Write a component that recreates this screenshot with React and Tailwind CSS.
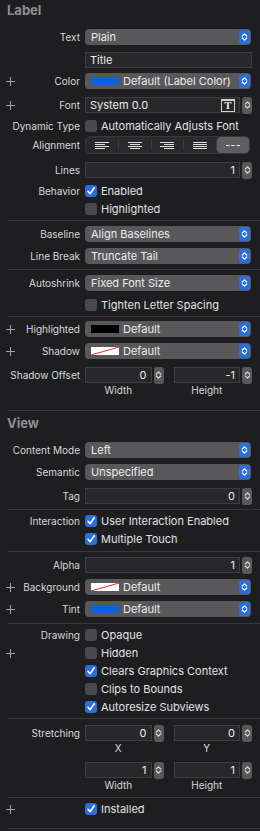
import React from "react";

const Plus = () => (
  <svg width="9" height="9" viewBox="0 0 9 9">
    <path d="M4.5 0v9M0 4.5h9" stroke="#a2a2a4" strokeWidth="1" />
  </svg>
);

const Chevrons = ({ color = "#ffffff" }) => (
  <svg width="7" height="10" viewBox="0 0 7 10">
    <path d="M1.3 4 L3.5 1.8 L5.7 4 M1.3 6 L3.5 8.2 L5.7 6" fill="none" stroke={color} strokeWidth="1.2" strokeLinecap="round" strokeLinejoin="round" />
  </svg>
);

const Check = () => (
  <svg width="10" height="10" viewBox="0 0 10 10">
    <path d="M2 5.3 L4.2 7.6 L8.2 1.8" fill="none" stroke="#ffffff" strokeWidth="1.6" strokeLinecap="round" strokeLinejoin="round" />
  </svg>
);

const Row = ({ cls, label, plus, children }) => (
  <div className={`flex h-[18px] items-center ${cls}`}>
    <div className="relative flex h-full w-[85px] shrink-0 items-center justify-end pr-[5px] text-[10px] text-[#d8d8da]">
      {plus && (
        <span className="absolute left-[6px] top-[5px] flex">
          <Plus />
        </span>
      )}
      {label}
    </div>
    <div className="flex flex-1 items-center pr-[8px]">{children}</div>
  </div>
);

const Sep = ({ cls }) => <div className={`ml-[8px] h-px bg-[#38383a] ${cls}`} />;

const Popup = ({ text, swatch }) => (
  <div className="mr-px flex h-[16px] flex-1 items-center rounded-[4px] bg-[#58585a] pl-[6px] pr-px text-[11px] text-[#ececec]">
    {swatch === "blue" && <div className="mr-[4px] h-[8px] w-[28px] bg-[#0a64d8]" />}
    {swatch === "black" && <div className="mr-[4px] h-[8px] w-[28px] bg-black" />}
    {swatch === "none" && (
      <svg className="mr-[4px]" width="28" height="8" viewBox="0 0 28 8">
        <rect width="28" height="8" fill="#ffffff" />
        <path d="M0 8 L28 0" stroke="#e8302a" strokeWidth="1" />
      </svg>
    )}
    <span>{text}</span>
    <div className="ml-auto flex h-[14px] w-[11px] items-center justify-center rounded-[3px] bg-[#2a6fdc]">
      <Chevrons />
    </div>
  </div>
);

const Field = ({ value, right, children }) => (
  <div className={`flex h-[16px] flex-1 items-center border border-[#3d3d3f] bg-[#28282a] px-[4px] text-[11px] text-[#ececec] ${right ? "justify-end" : ""}`}>
    {value}
    {children}
  </div>
);

const Stepper = () => (
  <div className="ml-[2px] flex h-[17px] w-[10px] shrink-0 items-center justify-center rounded-[3px] bg-[#58585a]">
    <Chevrons color="#d6d6d6" />
  </div>
);

const Checkbox = ({ on, text }) => (
  <div className="flex items-center gap-[4px] text-[11px] text-[#e2e2e4]">
    {on ? (
      <div className="flex h-[12px] w-[12px] items-center justify-center rounded-[3px] bg-[#2a6fdc]">
        <Check />
      </div>
    ) : (
      <div className="h-[12px] w-[12px] rounded-[3px] bg-[#4a4a4c]" />
    )}
    <span>{text}</span>
  </div>
);

const Lines = ({ kind }) => {
  const rows = [0.5, 2.5, 4.5, 6.5];
  const lens = kind === "justify" ? [14, 14, 14, 14] : [14, 10, 14, 10];
  return (
    <svg width="14" height="7" viewBox="0 0 14 7">
      {rows.map((y, i) => {
        const l = lens[i];
        let x = 0;
        if (kind === "center") x = (14 - l) / 2;
        if (kind === "right") x = 14 - l;
        return <path key={i} d={`M${x} ${y}h${l}`} stroke="#e0e0e0" strokeWidth="1" />;
      })}
    </svg>
  );
};

const Segmented = () => (
  <div className="mr-[2px] flex h-[18px] flex-1 items-stretch rounded-[5px] border border-[#38383a] bg-[#2a2a2c]">
    {["left", "center", "right", "justify"].map((k) => (
      <div key={k} className="my-[3px] flex flex-1 items-center justify-center border-r border-[#3e3e40]">
        <Lines kind={k} />
      </div>
    ))}
    <div className="flex flex-1 items-center justify-center rounded-[4px] bg-[#5e5e60]">
      <svg width="14" height="3" viewBox="0 0 14 3">
        <path d="M0 1.5h3.5M5.25 1.5h3.5M10.5 1.5h3.5" stroke="#e8e8e8" strokeWidth="1" />
      </svg>
    </div>
  </div>
);

const Pair = ({ a, b }) => (
  <div className="grid flex-1 grid-cols-2 gap-[10px]">
    <div className="flex items-center">
      <Field value={a} right />
      <Stepper />
    </div>
    <div className="flex items-center">
      <Field value={b} right />
      <Stepper />
    </div>
  </div>
);

const Captions = ({ cls, a, b }) => (
  <div className={`flex h-[12px] items-center ${cls}`}>
    <div className="w-[85px] shrink-0" />
    <div className="grid flex-1 grid-cols-2 gap-[10px] pr-[8px] text-[10px] text-[#d8d8da]">
      <div className="pr-[12px] text-center">{a}</div>
      <div className="pr-[12px] text-center">{b}</div>
    </div>
  </div>
);

const Header = ({ cls, text }) => (
  <div className={`flex h-[18px] items-center pl-[7px] text-[13px] font-bold text-[#8e8e90] ${cls}`}>{text}</div>
);

export default function App() {
  return (
    <div className="min-h-[831px] w-[260px] overflow-hidden bg-[#1e1e20] font-[Inter,sans-serif] leading-none antialiased">
      <Header cls="mt-px" text="Label" />
      <Row cls="mt-[9px]" label="Text"><Popup text="Plain" /></Row>
      <Row cls="mt-[5px]" label=""><Field value="Title" /></Row>
      <Row cls="mt-[3px]" label="Color" plus><Popup text="Default (Label Color)" swatch="blue" /></Row>
      <Row cls="mt-[6px]" label="Font" plus>
        <Field value="System 0.0">
          <div className="ml-auto flex h-[13px] w-[14px] items-center justify-center border border-t-2 border-[#d0d0d0] font-['Liberation_Serif',serif] text-[11px] font-bold text-[#e8e8e8]">T</div>
        </Field>
        <Stepper />
      </Row>
      <Row cls="mt-[3px]" label="Dynamic Type"><Checkbox text="Automatically Adjusts Font" /></Row>
      <Row cls="mt-px" label="Alignment"><Segmented /></Row>
      <Row cls="mt-[7px]" label="Lines"><Field value="1" right /><Stepper /></Row>
      <Row cls="mt-[3px]" label="Behavior"><Checkbox on text="Enabled" /></Row>
      <Row cls="mt-0" label=""><Checkbox text="Highlighted" /></Row>
      <Sep cls="mt-[2px]" />
      <Row cls="mt-[4px]" label="Baseline"><Popup text="Align Baselines" /></Row>
      <Row cls="mt-[4px]" label="Line Break"><Popup text="Truncate Tail" /></Row>
      <Sep cls="mt-[4px]" />
      <Row cls="mt-[4px]" label="Autoshrink"><Popup text="Fixed Font Size" /></Row>
      <Row cls="mt-[4px]" label=""><Checkbox text="Tighten Letter Spacing" /></Row>
      <Sep cls="mt-[2px]" />
      <Row cls="mt-[3px]" label="Highlighted" plus><Popup text="Default" swatch="black" /></Row>
      <Row cls="mt-[4px]" label="Shadow" plus><Popup text="Default" swatch="none" /></Row>
      <Row cls="mt-[6px]" label="Shadow Offset"><Pair a="0" b="-1" /></Row>
      <Captions cls="mt-0" a="Width" b="Height" />
      <Sep cls="mt-[14px]" />

      <Header cls="mt-[3px]" text="View" />
      <Row cls="mt-[9px]" label="Content Mode"><Popup text="Left" /></Row>
      <Row cls="mt-[4px]" label="Semantic"><Popup text="Unspecified" /></Row>
      <Row cls="mt-[6px]" label="Tag"><Field value="0" right /><Stepper /></Row>
      <Sep cls="mt-[4px]" />
      <Row cls="mt-[2px]" label="Interaction"><Checkbox on text="User Interaction Enabled" /></Row>
      <Row cls="mt-0" label=""><Checkbox on text="Multiple Touch" /></Row>
      <Sep cls="mt-[3px]" />
      <Row cls="mt-[4px]" label="Alpha"><Field value="1" right /><Stepper /></Row>
      <Row cls="mt-[4px]" label="Background" plus><Popup text="Default" swatch="none" /></Row>
      <Row cls="mt-[4px]" label="Tint" plus><Popup text="Default" swatch="blue" /></Row>
      <Sep cls="mt-[5px]" />
      <Row cls="mt-[2px]" label="Drawing"><Checkbox text="Opaque" /></Row>
      <Row cls="mt-0" label="" plus><Checkbox text="Hidden" /></Row>
      <Row cls="mt-0" label=""><Checkbox on text="Clears Graphics Context" /></Row>
      <Row cls="mt-0" label=""><Checkbox text="Clips to Bounds" /></Row>
      <Row cls="mt-0" label=""><Checkbox on text="Autoresize Subviews" /></Row>
      <Sep cls="mt-[2px]" />
      <Row cls="mt-[5px]" label="Stretching"><Pair a="0" b="0" /></Row>
      <Captions cls="mt-0" a="X" b="Y" />
      <Row cls="mt-[7px]" label=""><Pair a="1" b="1" /></Row>
      <Captions cls="mt-0" a="Width" b="Height" />
      <Sep cls="mt-[6px]" />
      <Row cls="mt-[2px]" label="" plus><Checkbox on text="Installed" /></Row>
      <Sep cls="mt-[10px]" />
    </div>
  );
}
